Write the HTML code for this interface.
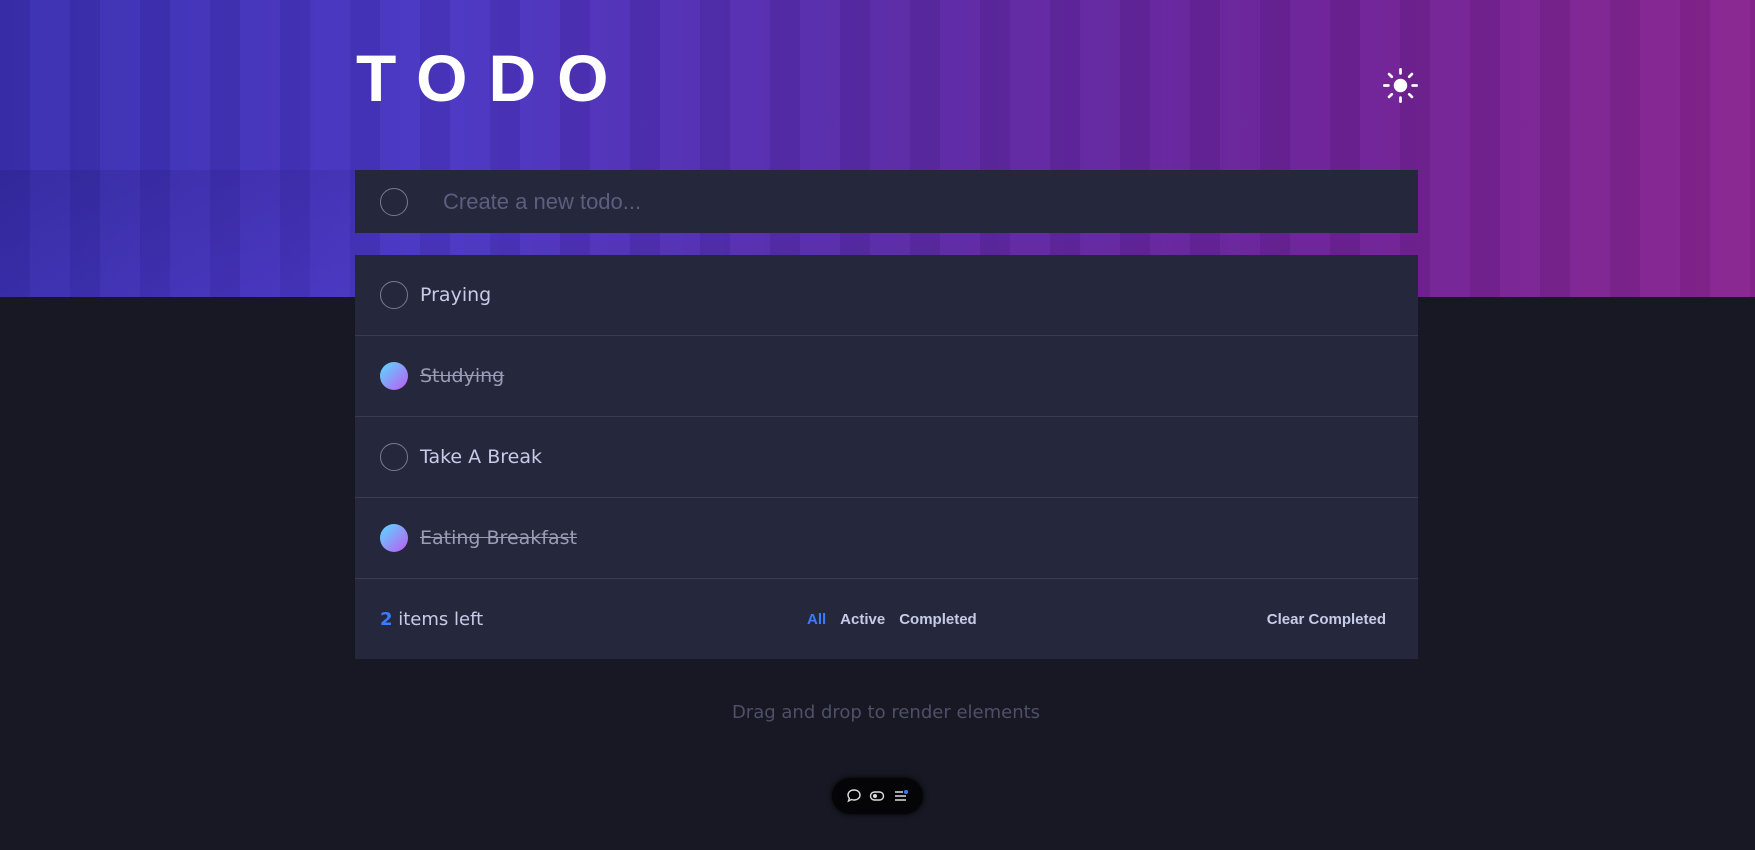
<!DOCTYPE html>
<html><head><meta charset="utf-8"><style>
*{margin:0;padding:0;box-sizing:border-box}
body{width:1755px;height:850px;background:#181824;font-family:"Liberation Sans",sans-serif;position:relative;overflow:hidden}
.hero{position:absolute;left:0;top:0;width:1755px;height:297px;background:linear-gradient(90deg,#3a2fb0 0%,#4a36c4 25%,#5a2aa8 50%,#6c2298 75%,#8a2590 100%)}
.hero:before{content:"";position:absolute;inset:0;background:repeating-linear-gradient(90deg,rgba(0,0,0,.06) 0 30px,rgba(255,255,255,.02) 30px 70px);}
.hero:after{content:"";position:absolute;left:0;top:170px;width:360px;height:127px;background:linear-gradient(170deg,rgba(20,10,80,.15),rgba(80,60,200,.2))}
h1{position:absolute;left:356px;top:40px;color:#fff;font-size:66px;font-weight:bold;letter-spacing:21px;z-index:2}
.sun{position:absolute;left:1383px;top:68px;z-index:2}
.card{position:absolute;left:355px;width:1063px;background:#25273c;z-index:2}
.input{top:170px;height:63px;display:flex;align-items:center}
.circ{width:28px;height:28px;border-radius:50%;border:1.5px solid #777a92;margin-left:25px;flex:none}
.input span{color:#5b5e7e;font-size:22px;margin-left:35px}
.list{top:255px}
.row{height:81px;border-bottom:1px solid #393a4c;display:flex;align-items:center;font-family:"DejaVu Sans",sans-serif;font-size:19px;color:#c8cbe7}
.row .circ{margin-right:12px}
.done{background:linear-gradient(135deg,#57ddff,#c058f3);border:none}
.row s{color:#9a9cb6}
.foot{height:80px;display:flex;align-items:center;position:relative;color:#c8cbe7}
.left{margin-left:25px;font-family:"DejaVu Sans",sans-serif;font-size:18px}
.left b{color:#3a7cfd}
.filters{position:absolute;left:452px;font-size:15px;font-weight:bold}
.filters span{margin-right:14px}
.clear{position:absolute;right:32px;font-size:15px;font-weight:bold}
.drag{position:absolute;top:702px;width:100%;text-align:center;color:#4d5067;font-family:"DejaVu Sans",sans-serif;font-size:18px;padding-left:17px}
.tb{position:absolute;left:832px;top:778px;width:91px;height:36px;background:#050507;border-radius:18px;box-shadow:0 0 6px #000;display:flex;align-items:center;justify-content:space-around;padding:0 10px}
</style></head><body>
<div class="hero"></div>
<h1>TODO</h1>
<svg class="sun" width="35" height="35" viewBox="0 0 26 26"><circle cx="13" cy="13" r="5" fill="#fff"/><g stroke="#fff" stroke-width="2" stroke-linecap="round"><path d="M13 1v3M13 22v3M1 13h3M22 13h3M4.5 4.5l2 2M19.5 19.5l2 2M4.5 21.5l2-2M19.5 6.5l2-2"/></g></svg>
<div class="card input"><div class="circ"></div><span>Create a new todo...</span></div>
<div class="card list">
<div class="row"><div class="circ"></div>Praying</div>
<div class="row"><div class="circ done"></div><s>Studying</s></div>
<div class="row"><div class="circ"></div>Take A Break</div>
<div class="row"><div class="circ done"></div><s>Eating Breakfast</s></div>
<div class="foot"><div class="left"><b>2</b> items left</div><div class="filters"><span style="color:#3a7cfd">All</span><span>Active</span><span>Completed</span></div><div class="clear">Clear Completed</div></div>
</div>
<div class="drag">Drag and drop to render elements</div>
<div class="tb">
<svg width="16" height="16" viewBox="0 0 16 16"><path d="M8 2c3.5 0 6 2 6 5s-2.5 5-6 5c-1 0-2-.2-2.6-.5L2.5 13l.8-2.6C2.5 9.5 2 8.3 2 7c0-3 2.5-5 6-5z" fill="none" stroke="#ddd" stroke-width="1.4"/></svg>
<svg width="16" height="16" viewBox="0 0 16 16"><rect x="1.5" y="4" width="13" height="8" rx="4" fill="none" stroke="#ddd" stroke-width="1.4"/><circle cx="6" cy="8" r="2" fill="#ddd"/></svg>
<svg width="16" height="16" viewBox="0 0 16 16"><path d="M2 4h8M2 8h11M2 12h11" stroke="#ddd" stroke-width="1.5"/><circle cx="13" cy="4" r="2" fill="#3a7cfd"/></svg>
</div>
</body></html>
